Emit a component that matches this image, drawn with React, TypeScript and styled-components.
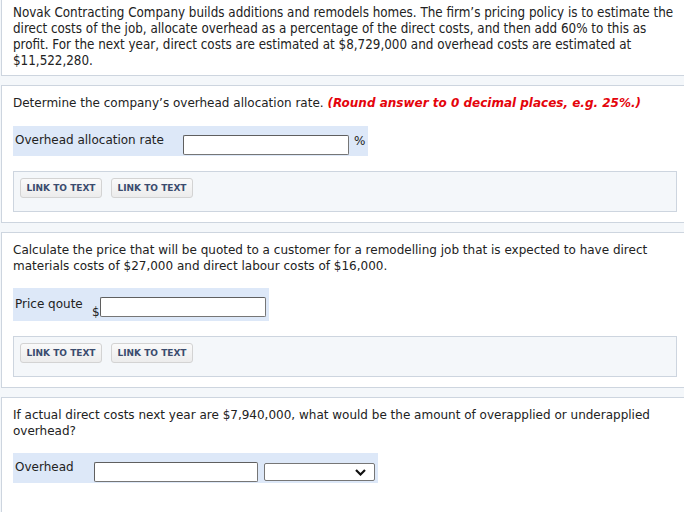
import React from "react";
import styled, { createGlobalStyle } from "styled-components";

const Global = createGlobalStyle`
  html, body { margin: 0; padding: 0; }
  body {
    background: #f4f7fa;
    overflow: hidden;
    font-family: "DejaVu Sans", Verdana, sans-serif;
    color: #222;
  }
`;

const Page = styled.div`
  width: 688px;
  padding-left: 1px;
  display: flex;
  flex-direction: column;
  gap: 9px;
`;

const Panel = styled.section<{ $first?: boolean; $last?: boolean }>`
  background: #fff;
  border: 1px solid #cdd5df;
  border-top-width: ${(p) => (p.$first ? 0 : 1)}px;
  padding: ${(p) => (p.$first ? "5px 11px 6px" : "9px 11px 10px")};
  min-height: ${(p) => (p.$last ? "95px" : "0")};
  display: flex;
  flex-direction: column;
`;

const Intro = styled.p<{ $tahoma?: boolean }>`
  margin: 0;
  font-family: ${(p) =>
    p.$tahoma ? '"DejaVu Sans Condensed", "DejaVu Sans", sans-serif' : '"DejaVu Sans", Verdana, sans-serif'};
  font-size: ${(p) => (p.$tahoma ? "13.3px" : "12px")};
  line-height: 16px;
  color: #222;
`;

const Hint = styled.span`
  color: #e4040b;
  font-weight: bold;
  font-style: italic;
`;

const FieldRow = styled.div<{ $top: number }>`
  margin-top: ${(p) => p.$top}px;
  align-self: flex-start;
  background: #dde8f8;
  display: flex;
  align-items: flex-start;
  padding: 0 3px 1px 2px;
`;

const Label = styled.span<{ $w: number; $pt: number }>`
  width: ${(p) => p.$w}px;
  padding-top: ${(p) => p.$pt}px;
  font-size: 12px;
  line-height: 16px;
  color: #222;
`;

const Input = styled.input<{ $w: number; $mt: number; $mb?: number }>`
  box-sizing: border-box;
  width: ${(p) => p.$w}px;
  height: 20px;
  margin: ${(p) => p.$mt}px 0 ${(p) => p.$mb ?? 0}px 0;
  padding: 0 3px;
  border: 1px solid #767676;
  border-top-color: #5f5f5f;
  border-left-color: #5f5f5f;
  border-radius: 2px;
  background: #fff;
  font-family: "DejaVu Sans", sans-serif;
  font-size: 12px;
`;

const Unit = styled.span<{ $mt: number; $ml: number }>`
  margin-top: ${(p) => p.$mt}px;
  margin-left: ${(p) => p.$ml}px;
  font-size: 12px;
  line-height: 16px;
  color: #222;
`;

const SelectBox = styled.div`
  box-sizing: border-box;
  width: 111px;
  height: 18px;
  margin: 10px 0 0 6px;
  border: 1px solid #767676;
  border-radius: 2px;
  background: #fff;
  display: flex;
  align-items: center;
  justify-content: flex-end;
  padding-right: 8px;
`;

const LinkBox = styled.div<{ $top: number }>`
  margin-top: ${(p) => p.$top}px;
  background: #f4f7fa;
  border: 1px solid #cdd5df;
  padding: 6px 6px 13px;
  display: flex;
  gap: 9px;
`;

const LinkButton = styled.button`
  box-sizing: border-box;
  height: 20px;
  width: 82px;
  padding: 0;
  border: 1px solid #d3d3d3;
  border-radius: 3px;
  background: linear-gradient(#fafafa, #ececec);
  color: #3b4c6e;
  font-family: "DejaVu Sans", Verdana, sans-serif;
  font-weight: bold;
  font-size: 9px;
  line-height: 18px;
  text-align: center;
  cursor: pointer;
`;

const Chevron = () => (
  <svg width="11" height="7" viewBox="0 0 11 7">
    <path d="M1 1 L5.5 5.5 L10 1" fill="none" stroke="#111" strokeWidth="2.2" />
  </svg>
);

const Links = ({ top }: { top: number }) => (
  <LinkBox $top={top}>
    <LinkButton>LINK TO TEXT</LinkButton>
    <LinkButton>LINK TO TEXT</LinkButton>
  </LinkBox>
);

export default function App() {
  return (
    <>
      <Global />
      <Page>
        <Panel $first>
          <Intro $tahoma>
            Novak Contracting Company builds additions and remodels homes. The firm’s pricing policy is to
            estimate the direct costs of the job, allocate overhead as a percentage of the direct costs, and then
            add 60% to this as profit. For the next year, direct costs are estimated at $8,729,000 and overhead
            costs are estimated at $11,522,280.
          </Intro>
        </Panel>

        <Panel>
          <Intro>
            Determine the company’s overhead allocation rate.{" "}
            <Hint>(Round answer to 0 decimal places, e.g. 25%.)</Hint>
          </Intro>
          <FieldRow $top={15}>
            <Label $w={168} $pt={6}>Overhead allocation rate</Label>
            <Input $w={166} $mt={9} />
            <Unit $mt={7} $ml={5}>%</Unit>
          </FieldRow>
          <Links top={15} />
        </Panel>

        <Panel>
          <Intro>
            Calculate the price that will be quoted to a customer for a remodelling job that is expected to have
            direct materials costs of $27,000 and direct labour costs of $16,000.
          </Intro>
          <FieldRow $top={14}>
            <Label $w={77} $pt={8}>Price qoute</Label>
            <Unit $mt={16} $ml={0}>$</Unit>
            <Input $w={166} $mt={9} $mb={2} />
          </FieldRow>
          <Links top={15} />
        </Panel>

        <Panel $last>
          <Intro>
            If actual direct costs next year are $7,940,000, what would be the amount of overapplied or
            underapplied overhead?
          </Intro>
          <FieldRow $top={14}>
            <Label $w={79} $pt={6}>Overhead</Label>
            <Input $w={164} $mt={9} />
            <SelectBox>
              <Chevron />
            </SelectBox>
          </FieldRow>
        </Panel>
      </Page>
    </>
  );
}
